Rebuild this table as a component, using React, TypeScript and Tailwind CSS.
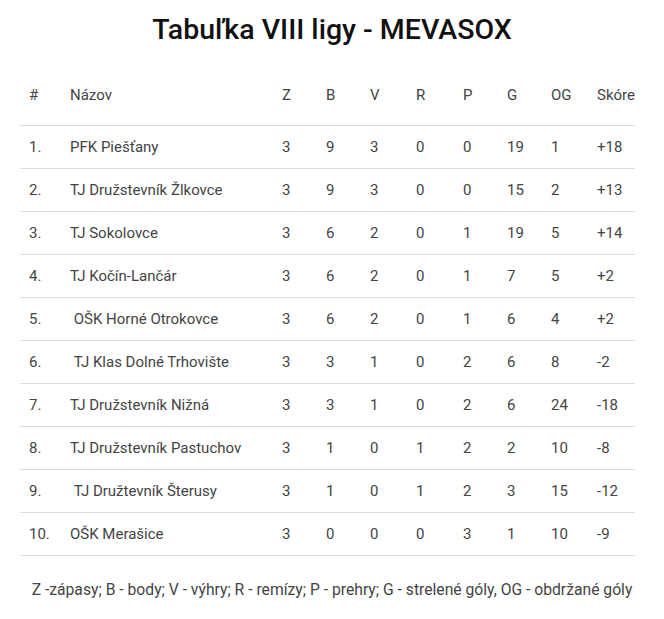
import React from "react";

const rows: string[][] = [
  ["1.", "PFK Piešťany", "3", "9", "3", "0", "0", "19", "1", "+18"],
  ["2.", "TJ Družstevník Žlkovce", "3", "9", "3", "0", "0", "15", "2", "+13"],
  ["3.", "TJ Sokolovce", "3", "6", "2", "0", "1", "19", "5", "+14"],
  ["4.", "TJ Kočín-Lančár", "3", "6", "2", "0", "1", "7", "5", "+2"],
  ["5.", "\u00a0OŠK Horné Otrokovce", "3", "6", "2", "0", "1", "6", "4", "+2"],
  ["6.", "\u00a0TJ Klas Dolné Trhovište", "3", "3", "1", "0", "2", "6", "8", "-2"],
  ["7.", "TJ Družstevník Nižná", "3", "3", "1", "0", "2", "6", "24", "-18"],
  ["8.", "TJ Družstevník Pastuchov", "3", "1", "0", "1", "2", "2", "10", "-8"],
  ["9.", "\u00a0TJ Družtevník Šterusy", "3", "1", "0", "1", "2", "3", "15", "-12"],
  ["10.", "OŠK Merašice", "3", "0", "0", "0", "3", "1", "10", "-9"],
];

const head = ["#", "Názov", "Z", "B", "V", "R", "P", "G", "OG", "Skóre"];
const cols = "grid grid-cols-[41px_212px_44px_44px_46px_47px_44px_44px_46px_47px]";

export default function App() {
  return (
    <div className="w-[664px] h-[619px] bg-white text-[#444] font-['Roboto',sans-serif]">
      <h1 className="pt-[10px] h-[58px] text-center text-[28.5px] font-medium text-[#111] leading-[40px]">
        Tabuľka VIII ligy - MEVASOX
      </h1>
      <div className="mx-[20px] w-[615px] text-[15px]">
        <div className={`${cols} h-[68px] items-center border-b border-[#ddd]`}>
          {head.map((h, i) => (
            <div key={i} className="pl-[9px] pt-[8px]">{h}</div>
          ))}
        </div>
        {rows.map((r, ri) => (
          <div key={ri} className={`${cols} h-[43px] items-center border-b border-[#ddd]`}>
            {r.map((c, i) => (
              <div key={i} className="pl-[9px] pt-[1px] whitespace-pre">{c}</div>
            ))}
          </div>
        ))}
      </div>
      <p className="mt-[22px] text-center text-[15.7px]">
        Z -zápasy; B - body; V - výhry; R - remízy; P - prehry; G - strelené góly, OG - obdržané góly
      </p>
    </div>
  );
}
